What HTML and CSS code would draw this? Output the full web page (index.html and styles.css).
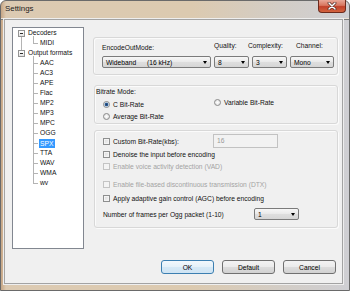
FILE: index.html
```html
<!DOCTYPE html>
<html lang="en">
<head>
  <meta charset="UTF-8" />
  <title>Settings</title>
  <link rel="stylesheet" href="styles.css">
</head>
<body>
  <div class="window">
    <div class="titlebar">
      <span class="title">Settings</span>
      <div class="close">
        <svg width="10" height="8" viewBox="0 0 10 8">
          <path d="M2 1 L8 7 M8 1 L2 7" stroke="#4a2018" stroke-width="2.8" stroke-linecap="round"/>
          <path d="M2 1 L8 7 M8 1 L2 7" stroke="#fff" stroke-width="1.5" stroke-linecap="round"/>
        </svg>
      </div>
    </div>

    <div class="client">
      <ul class="tree">
        <li class="node">
          <div class="row"><span class="exp"></span>Decoders</div>
          <ul class="kids">
            <li><div class="row">MIDI</div></li>
          </ul>
        </li>
        <li class="node">
          <div class="row"><span class="exp"></span>Output formats</div>
          <ul class="kids">
            <li><div class="row">AAC</div></li>
            <li><div class="row">AC3</div></li>
            <li><div class="row">APE</div></li>
            <li><div class="row">Flac</div></li>
            <li><div class="row">MP2</div></li>
            <li><div class="row">MP3</div></li>
            <li><div class="row">MPC</div></li>
            <li><div class="row">OGG</div></li>
            <li><div class="row"><span class="sel">SPX</span></div></li>
            <li><div class="row">TTA</div></li>
            <li><div class="row">WAV</div></li>
            <li><div class="row">WMA</div></li>
            <li><div class="row">wv</div></li>
          </ul>
        </li>
      </ul>

      <div class="panel">
        <!-- encoder mode -->
        <div class="group g-mode">
          <div class="col">
            <div class="lbl enc">EncodeOutMode:</div>
            <div class="combo w-mode"><span class="band">Wideband</span><span>(16 kHz)</span><i class="arrow"></i></div>
          </div>
          <div class="col">
            <div class="lbl">Quality:</div>
            <div class="combo w-small"><span>8</span><i class="arrow"></i></div>
          </div>
          <div class="col">
            <div class="lbl shift-left">Complexity:</div>
            <div class="combo w-small"><span>3</span><i class="arrow"></i></div>
          </div>
          <div class="col">
            <div class="lbl shift-right">Channel:</div>
            <div class="combo w-chan"><span>Mono</span><i class="arrow"></i></div>
          </div>
        </div>

        <!-- bitrate mode -->
        <div class="group g-bitrate">
          <div class="caption">Bitrate Mode:</div>
          <div class="radios">
            <div class="radio-col">
              <div class="opt"><span class="radio checked"></span>C Bit-Rate</div>
              <div class="opt"><span class="radio"></span>Average Bit-Rate</div>
            </div>
            <div class="opt up"><span class="radio"></span>Variable Bit-Rate</div>
          </div>
        </div>

        <!-- options -->
        <div class="group g-opts">
          <div class="opt r1">
            <div class="lblgroup"><span class="check"></span>Custom Bit-Rate(kbs):</div>
            <div class="edit">16</div>
          </div>
          <div class="opt r2"><span class="check"></span>Denoise the input before encoding</div>
          <div class="opt r2 disabled"><span class="check"></span>Enable voice activity detection (VAD)</div>
          <div class="opt r4 disabled"><span class="check"></span>Enable file-based discontinuous transmission (DTX)</div>
          <div class="opt r5"><span class="check"></span>Apply adaptive gain control (AGC) before encoding</div>
          <div class="opt r6">
            <div class="frames">Number of frames per Ogg packet (1-10)</div>
            <div class="combo w-frames"><span>1</span><i class="arrow"></i></div>
          </div>
        </div>

        <div class="buttons">
          <button class="btn btn-ok">OK</button>
          <button class="btn">Default</button>
          <button class="btn">Cancel</button>
        </div>
      </div>
    </div>
  </div>
</body>
</html>
```

FILE: styles.css
```css
body {
  margin: 0;
  font-family: "Liberation Sans", Arial, sans-serif;
  font-size: 6.7px;
  color: #111;
}
.window {
  width: 350px;
  height: 291px;
  box-sizing: border-box;
  display: flex;
  flex-direction: column;
  border: 1px solid #6a6a6a;
  border-radius: 6px 6px 0 0;
  background: linear-gradient(to right, #c6a584 0, #dccab2 5px, #dccab0 55%, #d3cdc6 80%, #cfcfd3 100%);
}
.titlebar {
  height: 19px;
  display: flex;
  align-items: flex-start;
  box-shadow: inset 0 -1px #7c7c7c, inset 0 -2px #ebe3d6;
}
.title {
  margin-left: 4px;
  padding-top: 3px;
  font-size: 7.9px;
  line-height: 9px;
  color: #1c1c1c;
}
.close {
  margin: -1px 3px 0 auto;
  width: 28px;
  height: 13px;
  box-sizing: border-box;
  border: 1px solid #6d2a1c;
  border-top: none;
  border-radius: 0 0 4px 4px;
  background: linear-gradient(#e9a898 0, #d8765f 45%, #c2412a 55%, #d3643f 100%);
  display: flex;
  align-items: center;
  justify-content: center;
}

.client {
  flex: 1;
  margin: 0 7px 7px 4px;
  background: #f0f0f0;
  display: flex;
  align-items: flex-start;
  box-shadow: 0 0 0 1px #a3a3a3, 0 0 0 2px #eeeeee;
}

/* tree view */
.tree, .tree ul {
  list-style: none;
  margin: 0;
  padding: 0;
}
.tree {
  margin: 7px 0 0 7px;
  width: 72px;
  height: 222px;
  box-sizing: border-box;
  border: 1px solid #828790;
  background: #fff;
}
.node, .kids li {
  position: relative;
}
.row {
  height: 10px;
  line-height: 10px;
  display: flex;
  align-items: center;
  white-space: nowrap;
}
.exp {
  position: relative;
  width: 5px;
  height: 5px;
  border: 1px solid #939393;
  margin: 0 3px 0 5px;
  background: linear-gradient(#fff, #e3e3e3);
}
.exp::after {
  content: '';
  position: absolute;
  left: 1px;
  top: 2px;
  width: 3px;
  height: 1px;
  background: #2d2d2d;
}
.node:first-child::after {
  content: '';
  position: absolute;
  left: 8px;
  top: 9px;
  bottom: -2px;
  border-left: 1px solid #b4b4b4;
}
.kids li {
  padding-left: 27px;
}
.kids li::before {
  content: '';
  position: absolute;
  left: 20px;
  top: 0;
  width: 4px;
  height: 5px;
  border-left: 1px solid #b4b4b4;
  border-bottom: 1px solid #b4b4b4;
}
.kids li:first-child::before {
  top: -2px;
  height: 7px;
}
.kids li:not(:last-child)::after {
  content: '';
  position: absolute;
  left: 20px;
  top: 5px;
  bottom: 0;
  border-left: 1px solid #b4b4b4;
}
.sel {
  background: #3399ff;
  color: #fff;
  line-height: 9px;
  padding: 0 2px 0 1px;
  margin-left: -1px;
}

/* right side */
.panel {
  margin: 17px 4px 0 9px;
  width: 245px;
  height: 246px;
  box-sizing: border-box;
  padding-bottom: 9px;
  display: flex;
  flex-direction: column;
}
.group {
  box-sizing: border-box;
  border: 1px solid #d8d8d8;
  border-radius: 3px;
  box-shadow: inset 1px 1px #fbfbfb, 1px 1px #fbfbfb;
}
.g-mode {
  height: 38px;
  display: flex;
  padding: 3px 0 0 8px;
}
.col {
  display: flex;
  flex-direction: column;
  margin-right: 3px;
}
.lbl {
  height: 15px;
  line-height: 9px;
  box-sizing: border-box;
  white-space: nowrap;
}
.lbl.enc {
  padding-top: 2px;
}
.shift-left {
  margin-left: -4px;
}
.shift-right {
  margin-left: 6px;
}
.combo {
  height: 12px;
  box-sizing: border-box;
  border: 1px solid #7b7b7b;
  border-radius: 2px;
  background: linear-gradient(#f7f7f7, #e9e9e9 50%, #dedede 51%, #d6d6d6);
  display: flex;
  align-items: center;
  padding-left: 3px;
  color: #000;
}
.w-mode { width: 109px; }
.w-small { width: 35px; }
.w-chan { width: 44px; }
.w-frames { width: 45px; }
.band {
  width: 41px;
}
.arrow {
  margin: 0 3px 0 auto;
  width: 0;
  height: 0;
  border-left: 2.5px solid transparent;
  border-right: 2.5px solid transparent;
  border-top: 3px solid #000;
}

.g-bitrate {
  height: 39px;
  margin: 10px 0 0 1px;
  padding: 1px 0 0 1px;
}
.caption {
  line-height: 9px;
}
.radios {
  display: flex;
  margin-top: 2px;
  padding-left: 7px;
}
.radio-col {
  width: 111px;
}
.opt {
  display: flex;
  align-items: center;
  height: 12px;
  white-space: nowrap;
}
.opt.up {
  margin-top: -2px;
}
.radio {
  width: 5px;
  height: 5px;
  border: 1px solid #8a8a8a;
  border-radius: 50%;
  margin-right: 3px;
  background: radial-gradient(circle, #ffffff 0, #dadada 100%);
}
.radio.checked {
  background: radial-gradient(circle, #1d3d66 0, #2e5d96 1.4px, #d6e6f3 2.2px, #eeeeee 100%);
}

.g-opts {
  height: 98px;
  margin: 6px 0 0 1px;
  padding: 3px 0 0 8px;
}
.check {
  width: 5px;
  height: 5px;
  border: 1px solid #8e8f8f;
  margin-right: 3px;
  background: linear-gradient(135deg, #d9d9d9, #f7f7f7);
  box-shadow: inset 0 0 0 1px #f4f4f4;
}
.disabled {
  color: #a3a3a3;
}
.disabled .check {
  border-color: #c4c4c4;
  background: #f4f4f4;
}
.r1 {
  height: 14px;
}
.lblgroup {
  width: 110px;
  display: flex;
  align-items: center;
}
.edit {
  width: 65px;
  height: 14px;
  box-sizing: border-box;
  border: 1px solid #c2c2c2;
  background: #f2f2f2;
  color: #9a9a9a;
  padding-left: 3px;
  line-height: 12px;
}
.r4 {
  margin-top: 6px;
}
.r5 {
  margin-top: 2px;
  height: 13px;
}
.r6 {
  margin-top: 2px;
  height: 14px;
}
.frames {
  width: 151px;
}

.buttons {
  margin-top: auto;
  display: flex;
  justify-content: flex-end;
  gap: 8px;
  padding-right: 2px;
}
.btn {
  width: 53px;
  height: 14px;
  padding: 0;
  font-family: inherit;
  font-size: 6.7px;
  color: #000;
  border: 1px solid #707070;
  border-radius: 3px;
  background: linear-gradient(#f3f3f3, #ebebeb 50%, #dddddd 51%, #d1d1d1);
}
.btn-ok {
  border-color: #3c7fb1;
  background: linear-gradient(#f2f8fc, #e5f1f9 50%, #d6e9f6 51%, #cfe4f3);
}
```
